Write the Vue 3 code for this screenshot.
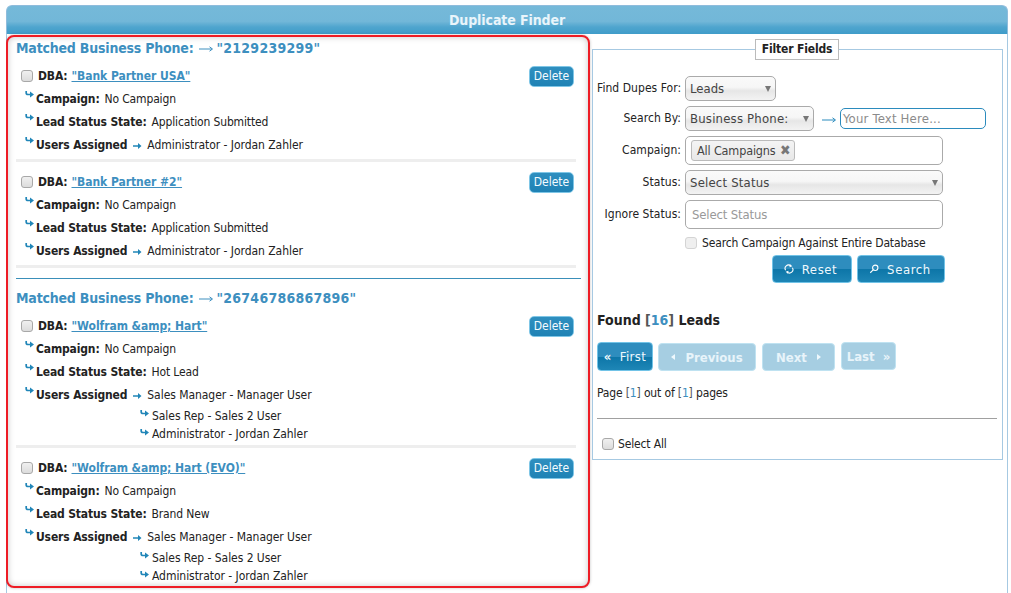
<script setup>
const groups = [
  {
    value: '"2129239299"',
    records: [
      { dba: '"Bank Partner USA"', status: 'Application Submitted', users: ['Administrator - Jordan Zahler'] },
      { dba: '"Bank Partner #2"', status: 'Application Submitted', users: ['Administrator - Jordan Zahler'] },
    ],
  },
  {
    value: '"26746786867896"',
    records: [
      { dba: '"Wolfram &amp; Hart"', status: 'Hot Lead', users: ['Sales Manager - Manager User', 'Sales Rep - Sales 2 User', 'Administrator - Jordan Zahler'] },
      { dba: '"Wolfram &amp; Hart (EVO)"', status: 'Brand New', users: ['Sales Manager - Manager User', 'Sales Rep - Sales 2 User', 'Administrator - Jordan Zahler'] },
    ],
  },
]
const hook = 'M1.2 1V3Q1.2 4.5 3 4.5H6'
</script>

<template>
  <div class="finder">
    <header class="bar">Duplicate Finder</header>
    <div class="body">
      <section class="results">
        <div v-for="(g, gi) in groups" :key="gi" class="group">
          <h2 class="match">
            <span class="lbl">Matched Business Phone:</span>
            <svg class="title-arrow" viewBox="0 0 14 8"><path d="M0 4H13M10.5 1.8L13.5 4L10.5 6.2" /></svg>
            <span class="val-num">{{ g.value }}</span>
          </h2>
          <article v-for="(r, ri) in g.records" :key="ri" class="record" :class="{ multi3: r.users.length > 1 }">
            <div class="dba">
              <input type="checkbox" class="check" />
              <b>DBA:</b>
              <a class="link">{{ r.dba }}</a>
              <button class="delete">Delete</button>
            </div>
            <div class="line">
              <svg class="hook" viewBox="0 0 9 8"><path :d="hook" /><path class="head" d="M5 1.5L9 4.5L5 7.5Z" /></svg>
              <b>Campaign:</b><span class="val">No Campaign</span>
            </div>
            <div class="line">
              <svg class="hook" viewBox="0 0 9 8"><path :d="hook" /><path class="head" d="M5 1.5L9 4.5L5 7.5Z" /></svg>
              <b>Lead Status State:</b><span class="val">{{ r.status }}</span>
            </div>
            <div class="line">
              <svg class="hook" viewBox="0 0 9 8"><path :d="hook" /><path class="head" d="M5 1.5L9 4.5L5 7.5Z" /></svg>
              <b>Users Assigned</b>
              <svg class="fat" viewBox="0 0 9 8"><path d="M0 3.2H5V1L8.5 4L5 7V4.8H0Z" /></svg>
              <span class="user">{{ r.users[0] }}</span>
            </div>
            <div v-for="(u, ui) in r.users.slice(1)" :key="ui" class="sub" :class="{ tight: ui === 1 }">
              <svg class="hook" viewBox="0 0 9 8"><path :d="hook" /><path class="head" d="M5 1.5L9 4.5L5 7.5Z" /></svg>
              <span class="user">{{ u }}</span>
            </div>
          </article>
        </div>
      </section>

      <aside class="side">
        <fieldset class="filters">
          <legend>Filter Fields</legend>
          <div class="form">
            <div class="row r1">
              <label>Find Dupes For:</label>
              <div class="select w91">Leads<i class="caret"></i></div>
            </div>
            <div class="row r2">
              <label>Search By:</label>
              <div class="select w129">Business Phone:<i class="caret"></i></div>
              <svg class="thin" viewBox="0 0 14 8"><path d="M0 4H13M10.5 1.8L13.5 4L10.5 6.2" /></svg>
              <div class="text-input">Your Text Here...</div>
            </div>
            <div class="row r3">
              <label>Campaign:</label>
              <div class="multi"><span class="chip">All Campaigns <span class="x">✖</span></span></div>
            </div>
            <div class="row r4">
              <label>Status:</label>
              <div class="select wide">Select Status<i class="caret"></i></div>
            </div>
            <div class="row r5">
              <label>Ignore Status:</label>
              <div class="multi ph">Select Status</div>
            </div>
            <div class="row r6">
              <label></label>
              <input type="checkbox" class="check dim" />
              <span class="entire">Search Campaign Against Entire Database</span>
            </div>
            <div class="actions">
              <button class="btn reset">
                <svg class="ico" viewBox="0 0 12 12"><path d="M2 7.5A4 4 0 0 1 8 2.3M10 4.5A4 4 0 0 1 4 9.7" /><path class="solid" d="M7 0L10 2.6L6.6 4ZM5 12L2 9.4L5.4 8Z" /></svg>
                Reset
              </button>
              <button class="btn search">
                <svg class="ico" viewBox="0 0 12 12"><circle cx="7.5" cy="4.5" r="3.2" /><path d="M5 7L1.5 10.5" /></svg>
                Search
              </button>
            </div>
          </div>

          <div class="found">Found <span class="br">[<em>16</em>]</span> Leads</div>
          <nav class="pager">
            <button class="btn p-first"><span class="dq">«</span> First</button>
            <button class="btn off p-prev"><i class="tri left"></i> Previous</button>
            <button class="btn off p-next">Next <i class="tri right"></i></button>
            <button class="btn off p-last">Last <span class="dq">»</span></button>
          </nav>
          <div class="pages">Page <span class="br">[<em>1</em>]</span> out of <span class="br">[<em>1</em>]</span> pages</div>
          <hr class="rule" />
          <label class="all"><input type="checkbox" class="check" /> Select All</label>
        </fieldset>
      </aside>
    </div>
  </div>
</template>

<style>
html, body { margin: 0; background: #fff; }
</style>

<style scoped>
.finder {
  width: 1002px;
  height: 593px;
  margin-left: 6px;
  padding-top: 5px;
  box-sizing: border-box;
  font-family: "DejaVu Sans", sans-serif;
  font-stretch: condensed;
  font-size: 12px;
  letter-spacing: -0.15px;
  color: #222;
  overflow: hidden;
}
.bar {
  height: 29px;
  box-sizing: border-box;
  border: 1px solid #8fbcdc;
  border-bottom: 0;
  border-radius: 6px 6px 0 0;
  background: linear-gradient(#75b9d9 0, #72b7d8 55%, #4fa5ce 75%, #3f9cc9 100%);
  color: #e9f5fb;
  font-weight: 700;
  font-size: 14px;
  letter-spacing: -0.1px;
  line-height: 28px;
  text-align: center;
}
.body {
  display: flex;
  height: 559px;
  border-left: 1px solid #a6c9e2;
  border-right: 1px solid #a6c9e2;
}
.results {
  width: 584px;
  height: 553px;
  margin: 1px 0 0 -1px;
  padding: 0 12px 0 8px;
  box-sizing: border-box;
  border: 2px solid #ee1c25;
  border-radius: 8px;
  box-shadow: inset 0 0 6px rgba(0, 0, 0, 0.22), 0 0 3px rgba(0, 0, 0, 0.25);
  background: #fff;
  flex: none;
  overflow: hidden;
}
.group + .group {
  margin-top: 10px;
  margin-right: -5px;
  padding-top: 9px;
  border-top: 1px solid #3a8fb9;
}
.group + .group .record { margin-right: 5px; }
.group:first-child { padding-top: 1px; }
.match {
  display: flex;
  align-items: center;
  margin: 0;
  height: 21px;
  font-size: 14px;
  line-height: 21px;
  font-weight: 700;
  color: #3d8fbf;
  letter-spacing: 0;
  white-space: nowrap;
}
.lbl { letter-spacing: -0.2px; }
.title-arrow { width: 14px; height: 8px; margin: 1px 4px 0 5px; flex: none; }
.title-arrow path { fill: none; stroke: #3d8fbf; stroke-width: 1; }
.val-num { letter-spacing: 0.25px; }
.record {
  padding: 6px 0 3px;
  border-bottom: 3px solid #eee;
}
.record + .record { padding-top: 9px; }
.record.multi3 { padding-bottom: 2px; }
.group:last-child .record:last-child { border-bottom: 0; }
.dba {
  display: flex;
  align-items: center;
  height: 22px;
  padding-left: 5px;
  gap: 4px;
}
.dba b { margin-left: 1px; }
.link {
  color: #3d8fbf;
  font-weight: 700;
  letter-spacing: -0.05px;
  text-decoration: underline;
}
.delete {
  margin-left: auto;
  margin-right: 2px;
  height: 21px;
  width: 45px;
  padding: 0;
  border: 1px solid #7fc6e6;
  border-radius: 5px;
  background: linear-gradient(#2f8fbf, #1f82b5);
  color: #f4fbff;
  font: inherit;
  font-size: 12px;
  letter-spacing: 0;
}
.check {
  appearance: none;
  -webkit-appearance: none;
  width: 12px;
  height: 12px;
  margin: 0;
  border: 1px solid #a8a8a8;
  border-radius: 3px;
  background: linear-gradient(#f0f0f0, #dcdcdc);
  box-sizing: border-box;
  flex: none;
}
.check.dim { border-color: #d4d4d4; background: #efefef; }
.line {
  display: flex;
  align-items: center;
  height: 23px;
  padding-left: 9px;
  gap: 2px;
}
.val { margin-left: 3px; }
.user { letter-spacing: -0.05px; }
.sub {
  display: flex;
  align-items: center;
  height: 19px;
  padding-left: 124px;
  gap: 3px;
}
.sub.tight { height: 18px; }
.hook {
  width: 9px;
  height: 8px;
  align-self: flex-start;
  margin-top: 3px;
  flex: none;
}
.hook path { fill: none; stroke: #2186b8; stroke-width: 1.7; }
.hook path.head { fill: #2186b8; stroke: none; }
.fat { width: 9px; height: 8px; margin: 3px 3px 0 4px; flex: none; }
.fat path { fill: #2186b8; }
.side { flex: 1; padding: 5px 4px 0 2px; }
.filters {
  margin: 0;
  padding: 0 5px 0 4px;
  height: 421px;
  box-sizing: border-box;
  border: 1px solid #a6c9e2;
}
legend {
  margin: 0 auto;
  padding: 0 6px;
  height: 21px;
  box-sizing: border-box;
  border: 1px solid #bbb;
  background: #fff;
  font-weight: 700;
  font-size: 12px;
  line-height: 19px;
}
.form { display: flex; flex-direction: column; padding-top: 16px; }
.row { display: flex; align-items: center; }
.row label {
  width: 84px;
  margin-right: 4px;
  padding-bottom: 2px;
  text-align: right;
  flex: none;
  white-space: nowrap;
  letter-spacing: 0.05px;
}
.r2, .r3, .r4, .r5 { margin-top: 5px; }
.r6 { margin-top: 7px; height: 14px; }
.r6 label { padding-bottom: 0; }
.select {
  position: relative;
  height: 25px;
  padding-left: 4px;
  box-sizing: border-box;
  border: 1px solid #aaa;
  border-radius: 5px;
  background: linear-gradient(#fafafa 0, #f6f6f6 45%, #e6e6e6 60%, #f3f3f3 100%);
  color: #444;
  font-size: 13px;
  letter-spacing: 0.2px;
  line-height: 24px;
  flex: none;
}
.w91 { width: 91px; letter-spacing: 0; }
.w129 { width: 129px; }
.wide { width: 258px; }
.caret {
  position: absolute;
  right: 4px;
  top: 9px;
  width: 0;
  height: 0;
  border: 3.5px solid transparent;
  border-top: 6px solid #777;
  border-bottom: 0;
}
.thin { width: 14px; height: 8px; margin: 2px 4px 0 8px; flex: none; }
.thin path { fill: none; stroke: #2b8bbd; stroke-width: 1; }
.text-input {
  width: 146px;
  height: 21px;
  padding-left: 2px;
  box-sizing: border-box;
  border: 1px solid #2b8bbd;
  border-radius: 5px;
  background: #fff;
  color: #8b8b8b;
  font-size: 13px;
  letter-spacing: 0.2px;
  line-height: 19px;
  flex: none;
}
.multi {
  width: 258px;
  height: 29px;
  padding: 3px 5px;
  box-sizing: border-box;
  border: 1px solid #aaa;
  border-radius: 5px;
  background: #fff;
  color: #999;
  flex: none;
}
.multi.ph { font-size: 13px; line-height: 21px; padding-left: 6px; }
.chip {
  display: inline-block;
  height: 21px;
  padding: 0 4px 0 5px;
  box-sizing: border-box;
  border: 1px solid #bbb;
  border-radius: 3px;
  background: linear-gradient(#f4f4f4, #e8e8e8);
  color: #444;
  font-size: 12.5px;
  line-height: 20px;
  white-space: nowrap;
}
.x { color: #777; font-size: 14px; line-height: 14px; margin-left: 1px; }
.entire { margin-left: 5px; }
.actions {
  display: flex;
  gap: 5px;
  margin: 5px 0 0 175px;
}
.btn {
  display: inline-flex;
  align-items: center;
  justify-content: center;
  box-sizing: border-box;
  height: 28px;
  padding: 0;
  border: 1px solid #71c3e7;
  border-radius: 4px;
  background: linear-gradient(#2e8dbe 0, #2e8dbe 50%, #0d76a8 52%, #1e86b6 100%);
  color: #eef8fd;
  font: inherit;
  font-size: 13px;
  font-weight: 700;
  letter-spacing: 0.3px;
  gap: 6px;
}
.reset { width: 80px; font-weight: 400; letter-spacing: 0.6px; gap: 8px; padding-right: 3px; }
.search { width: 88px; font-weight: 400; letter-spacing: 0.6px; gap: 8px; padding-right: 2px; }
.ico { width: 10px; height: 10px; flex: none; }
.ico path, .ico circle { fill: none; stroke: #fff; stroke-width: 1.3; }
.ico path.solid { fill: #fff; stroke: none; }
.found {
  margin-top: 28px;
  font-size: 14px;
  font-weight: 700;
  line-height: 18px;
  letter-spacing: 0;
  color: #222;
}
em { font-style: normal; color: #3d8fbf; }
.br { color: #555; }
.pager {
  display: flex;
  align-items: flex-start;
  margin-top: 13px;
  height: 29px;
}
.p-first { width: 56px; height: 29px; font-weight: 400; gap: 8px; letter-spacing: 0.4px; }
.off {
  background: #a6cee2;
  border-color: #bfe2f1;
  color: #e8f4fa;
  height: 28px;
  margin-top: 1px;
}
.p-prev { width: 98px; margin-left: 5px; gap: 10px; letter-spacing: 0; }
.p-next { width: 73px; margin-left: 6px; gap: 10px; letter-spacing: 0; }
.p-last { width: 55px; margin-left: 6px; margin-top: 0; gap: 8px; letter-spacing: 0; }
.dq { font-weight: 700; }
.tri { width: 0; height: 0; border: 3.5px solid transparent; }
.tri.left { border-right: 4px solid #eef8fd; border-left: 0; }
.tri.right { border-left: 4px solid #eef8fd; border-right: 0; }
.pages { margin-top: 14px; line-height: 16px; }
.rule { margin: 17px 0 0; border: 0; border-top: 1px solid #a0a0a0; }
.all {
  display: flex;
  align-items: center;
  gap: 4px;
  margin: 18px 0 0 5px;
}
</style>
